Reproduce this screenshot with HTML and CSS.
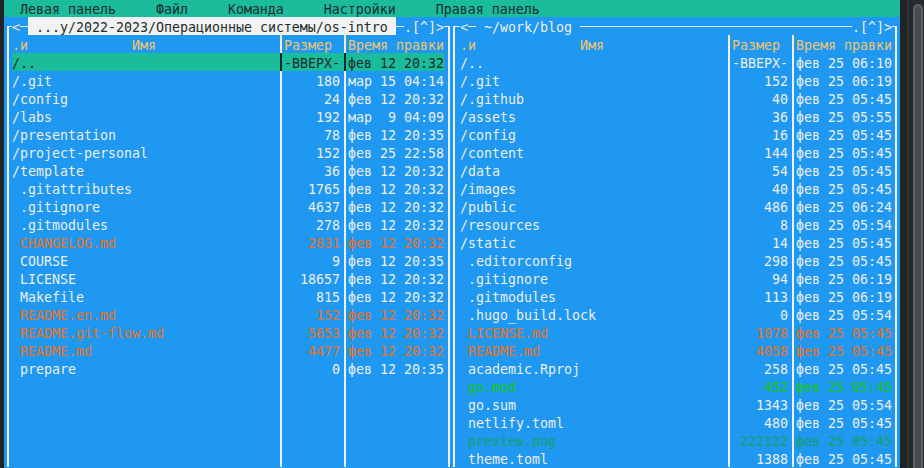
FILE: index.html
```html
<!DOCTYPE html>
<html lang="ru">
<head>
<meta charset="utf-8">
<title>mc</title>
<link rel="stylesheet" href="styles.css">
</head>
<body>
<div class="screen">
  <div class="gutter"></div>
  <div class="term">
    <div class="menu">  Левая панель     Файл     Команда     Настройки     Правая панель</div>
    <div class="panels">
      <section class="panel">
        <div class="title">
          <i class="cnr-l l1"></i><span class="t">&lt;</span><i class="hl"></i><span class="path active"> ...у/2022-2023/Операционные системы/os-intro </span><i class="hl fill"></i><span class="t">.[^]&gt;</span><i class="cnr-r r1"></i>
        </div>
        <div class="row head"><i class="vb l1"></i><span class="name">.и             Имя</span><i class="sep"></i><span class="size left">Размер</span><i class="sep"></i><span class="time">Время правки</span><i class="vb r1"></i></div>
        <div class="row sel"><i class="vb l1"></i><span class="name">/..</span><i class="sep"></i><span class="size">-ВВЕРХ-</span><i class="sep"></i><span class="time">фев 12 20:32</span><i class="vb r1"></i></div>
        <div class="row"><i class="vb l1"></i><span class="name">/.git</span><i class="sep"></i><span class="size">180</span><i class="sep"></i><span class="time">мар 15 04:14</span><i class="vb r1"></i></div>
        <div class="row"><i class="vb l1"></i><span class="name">/config</span><i class="sep"></i><span class="size">24</span><i class="sep"></i><span class="time">фев 12 20:32</span><i class="vb r1"></i></div>
        <div class="row"><i class="vb l1"></i><span class="name">/labs</span><i class="sep"></i><span class="size">192</span><i class="sep"></i><span class="time">мар  9 04:09</span><i class="vb r1"></i></div>
        <div class="row"><i class="vb l1"></i><span class="name">/presentation</span><i class="sep"></i><span class="size">78</span><i class="sep"></i><span class="time">фев 12 20:35</span><i class="vb r1"></i></div>
        <div class="row"><i class="vb l1"></i><span class="name">/project-personal</span><i class="sep"></i><span class="size">152</span><i class="sep"></i><span class="time">фев 25 22:58</span><i class="vb r1"></i></div>
        <div class="row"><i class="vb l1"></i><span class="name">/template</span><i class="sep"></i><span class="size">36</span><i class="sep"></i><span class="time">фев 12 20:32</span><i class="vb r1"></i></div>
        <div class="row"><i class="vb l1"></i><span class="name"> .gitattributes</span><i class="sep"></i><span class="size">1765</span><i class="sep"></i><span class="time">фев 12 20:32</span><i class="vb r1"></i></div>
        <div class="row"><i class="vb l1"></i><span class="name"> .gitignore</span><i class="sep"></i><span class="size">4637</span><i class="sep"></i><span class="time">фев 12 20:32</span><i class="vb r1"></i></div>
        <div class="row"><i class="vb l1"></i><span class="name"> .gitmodules</span><i class="sep"></i><span class="size">278</span><i class="sep"></i><span class="time">фев 12 20:32</span><i class="vb r1"></i></div>
        <div class="row doc"><i class="vb l1"></i><span class="name"> CHANGELOG.md</span><i class="sep"></i><span class="size">2831</span><i class="sep"></i><span class="time">фев 12 20:32</span><i class="vb r1"></i></div>
        <div class="row"><i class="vb l1"></i><span class="name"> COURSE</span><i class="sep"></i><span class="size">9</span><i class="sep"></i><span class="time">фев 12 20:35</span><i class="vb r1"></i></div>
        <div class="row"><i class="vb l1"></i><span class="name"> LICENSE</span><i class="sep"></i><span class="size">18657</span><i class="sep"></i><span class="time">фев 12 20:32</span><i class="vb r1"></i></div>
        <div class="row"><i class="vb l1"></i><span class="name"> Makefile</span><i class="sep"></i><span class="size">815</span><i class="sep"></i><span class="time">фев 12 20:32</span><i class="vb r1"></i></div>
        <div class="row doc"><i class="vb l1"></i><span class="name"> README.en.md</span><i class="sep"></i><span class="size">152</span><i class="sep"></i><span class="time">фев 12 20:32</span><i class="vb r1"></i></div>
        <div class="row doc"><i class="vb l1"></i><span class="name"> README.git-flow.md</span><i class="sep"></i><span class="size">5653</span><i class="sep"></i><span class="time">фев 12 20:32</span><i class="vb r1"></i></div>
        <div class="row doc"><i class="vb l1"></i><span class="name"> README.md</span><i class="sep"></i><span class="size">4477</span><i class="sep"></i><span class="time">фев 12 20:32</span><i class="vb r1"></i></div>
        <div class="row"><i class="vb l1"></i><span class="name"> prepare</span><i class="sep"></i><span class="size">0</span><i class="sep"></i><span class="time">фев 12 20:35</span><i class="vb r1"></i></div>
        <div class="row"><i class="vb l1"></i><span class="name"></span><i class="sep"></i><span class="size"></span><i class="sep"></i><span class="time"></span><i class="vb r1"></i></div>
        <div class="row"><i class="vb l1"></i><span class="name"></span><i class="sep"></i><span class="size"></span><i class="sep"></i><span class="time"></span><i class="vb r1"></i></div>
        <div class="row"><i class="vb l1"></i><span class="name"></span><i class="sep"></i><span class="size"></span><i class="sep"></i><span class="time"></span><i class="vb r1"></i></div>
        <div class="row"><i class="vb l1"></i><span class="name"></span><i class="sep"></i><span class="size"></span><i class="sep"></i><span class="time"></span><i class="vb r1"></i></div>
        <div class="row"><i class="vb l1"></i><span class="name"></span><i class="sep"></i><span class="size"></span><i class="sep"></i><span class="time"></span><i class="vb r1"></i></div>
      </section>
      <section class="panel">
        <div class="title">
          <i class="cnr-l l2"></i><span class="t">&lt;</span><i class="hl"></i><span class="path"> ~/work/blog </span><i class="hl fill"></i><span class="t">.[^]&gt;</span><i class="cnr-r r2"></i>
        </div>
        <div class="row head"><i class="vb l2"></i><span class="name">.и             Имя</span><i class="sep"></i><span class="size left">Размер</span><i class="sep"></i><span class="time">Время правки</span><i class="vb r2"></i></div>
        <div class="row"><i class="vb l2"></i><span class="name">/..</span><i class="sep"></i><span class="size">-ВВЕРХ-</span><i class="sep"></i><span class="time">фев 25 06:10</span><i class="vb r2"></i></div>
        <div class="row"><i class="vb l2"></i><span class="name">/.git</span><i class="sep"></i><span class="size">152</span><i class="sep"></i><span class="time">фев 25 06:19</span><i class="vb r2"></i></div>
        <div class="row"><i class="vb l2"></i><span class="name">/.github</span><i class="sep"></i><span class="size">40</span><i class="sep"></i><span class="time">фев 25 05:45</span><i class="vb r2"></i></div>
        <div class="row"><i class="vb l2"></i><span class="name">/assets</span><i class="sep"></i><span class="size">36</span><i class="sep"></i><span class="time">фев 25 05:55</span><i class="vb r2"></i></div>
        <div class="row"><i class="vb l2"></i><span class="name">/config</span><i class="sep"></i><span class="size">16</span><i class="sep"></i><span class="time">фев 25 05:45</span><i class="vb r2"></i></div>
        <div class="row"><i class="vb l2"></i><span class="name">/content</span><i class="sep"></i><span class="size">144</span><i class="sep"></i><span class="time">фев 25 05:45</span><i class="vb r2"></i></div>
        <div class="row"><i class="vb l2"></i><span class="name">/data</span><i class="sep"></i><span class="size">54</span><i class="sep"></i><span class="time">фев 25 05:45</span><i class="vb r2"></i></div>
        <div class="row"><i class="vb l2"></i><span class="name">/images</span><i class="sep"></i><span class="size">40</span><i class="sep"></i><span class="time">фев 25 05:45</span><i class="vb r2"></i></div>
        <div class="row"><i class="vb l2"></i><span class="name">/public</span><i class="sep"></i><span class="size">486</span><i class="sep"></i><span class="time">фев 25 06:24</span><i class="vb r2"></i></div>
        <div class="row"><i class="vb l2"></i><span class="name">/resources</span><i class="sep"></i><span class="size">8</span><i class="sep"></i><span class="time">фев 25 05:54</span><i class="vb r2"></i></div>
        <div class="row"><i class="vb l2"></i><span class="name">/static</span><i class="sep"></i><span class="size">14</span><i class="sep"></i><span class="time">фев 25 05:45</span><i class="vb r2"></i></div>
        <div class="row"><i class="vb l2"></i><span class="name"> .editorconfig</span><i class="sep"></i><span class="size">298</span><i class="sep"></i><span class="time">фев 25 05:45</span><i class="vb r2"></i></div>
        <div class="row"><i class="vb l2"></i><span class="name"> .gitignore</span><i class="sep"></i><span class="size">94</span><i class="sep"></i><span class="time">фев 25 06:19</span><i class="vb r2"></i></div>
        <div class="row"><i class="vb l2"></i><span class="name"> .gitmodules</span><i class="sep"></i><span class="size">113</span><i class="sep"></i><span class="time">фев 25 06:19</span><i class="vb r2"></i></div>
        <div class="row"><i class="vb l2"></i><span class="name"> .hugo_build.lock</span><i class="sep"></i><span class="size">0</span><i class="sep"></i><span class="time">фев 25 05:54</span><i class="vb r2"></i></div>
        <div class="row doc"><i class="vb l2"></i><span class="name"> LICENSE.md</span><i class="sep"></i><span class="size">1078</span><i class="sep"></i><span class="time">фев 25 05:45</span><i class="vb r2"></i></div>
        <div class="row doc"><i class="vb l2"></i><span class="name"> README.md</span><i class="sep"></i><span class="size">4058</span><i class="sep"></i><span class="time">фев 25 05:45</span><i class="vb r2"></i></div>
        <div class="row"><i class="vb l2"></i><span class="name"> academic.Rproj</span><i class="sep"></i><span class="size">258</span><i class="sep"></i><span class="time">фев 25 05:45</span><i class="vb r2"></i></div>
        <div class="row src"><i class="vb l2"></i><span class="name"> go.mod</span><i class="sep"></i><span class="size">452</span><i class="sep"></i><span class="time">фев 25 05:45</span><i class="vb r2"></i></div>
        <div class="row"><i class="vb l2"></i><span class="name"> go.sum</span><i class="sep"></i><span class="size">1343</span><i class="sep"></i><span class="time">фев 25 05:54</span><i class="vb r2"></i></div>
        <div class="row"><i class="vb l2"></i><span class="name"> netlify.toml</span><i class="sep"></i><span class="size">480</span><i class="sep"></i><span class="time">фев 25 05:45</span><i class="vb r2"></i></div>
        <div class="row img"><i class="vb l2"></i><span class="name"> preview.png</span><i class="sep"></i><span class="size">222122</span><i class="sep"></i><span class="time">фев 25 05:45</span><i class="vb r2"></i></div>
        <div class="row"><i class="vb l2"></i><span class="name"> theme.toml</span><i class="sep"></i><span class="size">1388</span><i class="sep"></i><span class="time">фев 25 05:45</span><i class="vb r2"></i></div>
      </section>
    </div>
  </div>
  <div class="scroll"><div class="thumb"></div></div>
</div>
</body>
</html>
```
FILE: styles.css
```css
* {
  margin: 0;
  padding: 0;
  box-sizing: border-box;
}

html, body {
  width: 924px;
  height: 468px;
  overflow: hidden;
  background: #202427;
}

body {
  font-family: "DejaVu Sans Mono", monospace;
  font-size: 13.29px;
  line-height: 18px;
  color: #eeeeee;
}

.screen {
  display: flex;
  height: 468px;
}

.gutter {
  width: 4px;
  flex: none;
  background: #202427;
}

.term {
  width: 896px;
  flex: none;
  margin-top: -1px;
  height: 469px;
  background: #1e98f0;
  overflow: hidden;
}

.menu {
  height: 18px;
  padding-top: 2px;
  background: #1abc9c;
  color: #1d2b2b;
  white-space: pre;
}

.panels {
  display: flex;
}

.panel {
  width: 448px;
  flex: none;
}

.title,
.row {
  display: flex;
  height: 18px;
  white-space: pre;
}

.title > span,
.row > span {
  height: 18px;
  padding-top: 2px;
}

.title i,
.row i {
  display: block;
  width: 8px;
  flex: none;
  height: 18px;
}

.t {
  color: #eeeeee;
}

.hl {
  background: linear-gradient(180deg, transparent 9px, #eeeeee 9px, #eeeeee 10px, transparent 10px);
}

.title .fill {
  flex: 1;
}

.path {
  color: #eeeeee;
}

.path.active {
  background: #f2f2f2;
  color: #1d2b2b;
}

/* corners */
.cnr-l.l1 {
  background:
    linear-gradient(180deg, transparent 9px, #eeeeee 9px, #eeeeee 10px, transparent 10px) 3px 0 / 5px 18px no-repeat,
    linear-gradient(90deg, transparent 3px, #eeeeee 3px, #eeeeee 5px, transparent 5px) 0 9px / 8px 9px no-repeat;
}

.cnr-r.r1 {
  background:
    linear-gradient(180deg, transparent 9px, #eeeeee 9px, #eeeeee 10px, transparent 10px) 0 0 / 6px 18px no-repeat,
    linear-gradient(90deg, transparent 4px, #eeeeee 4px, #eeeeee 6px, transparent 6px) 0 9px / 8px 9px no-repeat;
}

.cnr-l.l2 {
  background:
    linear-gradient(180deg, transparent 9px, #eeeeee 9px, #eeeeee 10px, transparent 10px) 1px 0 / 7px 18px no-repeat,
    linear-gradient(90deg, transparent 1px, #eeeeee 1px, #eeeeee 3px, transparent 3px) 0 9px / 8px 9px no-repeat;
}

.cnr-r.r2 {
  background:
    linear-gradient(180deg, transparent 9px, #eeeeee 9px, #eeeeee 10px, transparent 10px) 0 0 / 5px 18px no-repeat,
    linear-gradient(90deg, transparent 3px, #eeeeee 3px, #eeeeee 5px, transparent 5px) 0 9px / 8px 9px no-repeat;
}

/* vertical borders */
.vb.l1 {
  background: linear-gradient(90deg, transparent 3px, #eeeeee 3px, #eeeeee 5px, transparent 5px);
}

.vb.r1 {
  background: linear-gradient(90deg, transparent 4px, #eeeeee 4px, #eeeeee 6px, transparent 6px);
}

.vb.l2 {
  background: linear-gradient(90deg, transparent 1px, #eeeeee 1px, #eeeeee 3px, transparent 3px);
}

.vb.r2 {
  background: linear-gradient(90deg, transparent 3px, #eeeeee 3px, #eeeeee 5px, transparent 5px);
}

.sep {
  background: linear-gradient(90deg, transparent 4px, #eeeeee 4px, #eeeeee 6px, transparent 6px);
}

/* columns */
.name {
  width: 264px;
  flex: none;
}

.size {
  width: 56px;
  flex: none;
  text-align: right;
}

.size.left {
  text-align: left;
}

.time {
  width: 96px;
  flex: none;
}

.head {
  color: #f2c46c;
}

.doc {
  color: #ea721d;
}

.src {
  color: #17c80f;
}

.img {
  color: #16a067;
}

.sel > .name,
.sel > .size,
.sel > .time {
  background: #1abc9c;
  color: #1d2b2b;
}

.sel > .sep {
  background: linear-gradient(90deg, #1abc9c 4px, #1d2b2b 4px, #1d2b2b 6px, #1abc9c 6px);
}

/* terminal scrollbar */
.scroll {
  width: 24px;
  flex: none;
  height: 468px;
  display: flex;
  background:
    linear-gradient(90deg, #202427 0, #202427 7px, #383b3e 7px, #383b3e 8px, #272b2e 8px, #272b2e 24px);
  padding-left: 13px;
  padding-right: 1px;
  padding-top: 4px;
}

.thumb {
  width: 10px;
  flex: none;
  border: 2px solid #5f6265;
  border-bottom: none;
  border-radius: 5px 5px 0 0;
  background: #4a4d50;
}
```
